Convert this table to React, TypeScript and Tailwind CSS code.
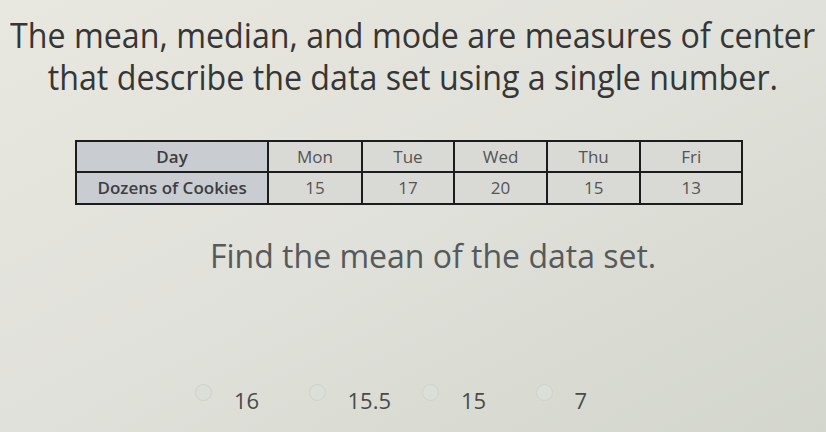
const DAYS = ['Mon', 'Tue', 'Wed', 'Thu', 'Fri']
const COOKIES = ['15', '17', '20', '15', '13']
const WIDTHS = ['w-[94px]', 'w-[93px]', 'w-[93px]', 'w-[94px]', 'w-[100px]']
const OPTIONS = ['16', '15.5', '15', '7']

export default function App() {
  return (
    <div className="w-[826px] h-[432px] overflow-hidden bg-gradient-to-br from-[#e8e7e0] via-[#e0e1da] to-[#d3d6cc] text-[#363636] font-['Open_Sans',sans-serif]">
      <div className="pt-[14px] flex flex-col items-center text-[35px] leading-[42px] whitespace-nowrap">
        <p className="scale-x-[0.92]">The mean, median, and mode are measures of center</p>
        <p className="scale-x-[0.92]">that describe the data set using a single number.</p>
      </div>

      <div className="mt-[42px] ml-[75px] w-[668px] border-2 border-[#1c1c1c] text-[17px]">
        <div className="flex h-[31px] border-b-2 border-[#1c1c1c]">
          <div className="w-[193px] flex items-center justify-center bg-[#c9ccd0] font-semibold text-[#3e3e40] border-r-2 border-[#1c1c1c]">
            Day
          </div>
          {DAYS.map((d, i) => (
            <div
              key={d}
              className={`${WIDTHS[i]} flex items-center justify-center bg-[#d9dad6] text-[#545454] ${i < 4 ? 'border-r-2 border-[#1c1c1c]' : ''}`}
            >
              {d}
            </div>
          ))}
        </div>
        <div className="flex h-[30px]">
          <div className="w-[193px] flex items-center justify-center bg-[#c9ccd0] font-semibold text-[#3e3e40] border-r-2 border-[#1c1c1c]">
            Dozens of Cookies
          </div>
          {COOKIES.map((c, i) => (
            <div
              key={i}
              className={`${WIDTHS[i]} flex items-center justify-center bg-[#d9dad6] text-[#545454] ${i < 4 ? 'border-r-2 border-[#1c1c1c]' : ''}`}
            >
              {c}
            </div>
          ))}
        </div>
      </div>

      <p className="mt-[31px] ml-[210px] text-[32px] leading-[40px] text-[#575a5c] whitespace-nowrap">
        Find the mean of the data set.
      </p>

      <div className="mt-[110px] ml-[195px] flex items-center">
        {OPTIONS.map((o) => (
          <div key={o} className="w-[113.5px] flex items-center gap-[22px]">
            <span className="w-[17px] h-[17px] rounded-full border border-[#cfd1cb] bg-[#dcdfd8] -mt-[16px]" />
            <span className="text-[22px] leading-[28px] text-[#4a4a4a]">{o}</span>
          </div>
        ))}
      </div>
    </div>
  )
}
